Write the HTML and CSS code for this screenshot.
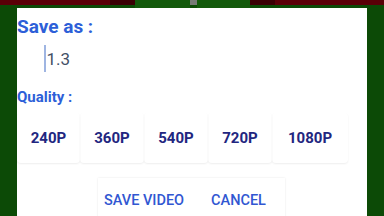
FILE: index.html
```html
<!DOCTYPE html>
<html lang="en">
<head>
	<meta charset="UTF-8">
	<title>Save as</title>
	<link rel="stylesheet" href="styles.css">
</head>
<body>
	<div class="strip">
		<div class="seg red" style="width:110px"></div>
		<div class="seg dark" style="width:25px"></div>
		<div class="seg green" style="width:55px"></div>
		<div class="seg grey" style="width:7px"></div>
		<div class="seg green" style="width:53px"></div>
		<div class="seg dark" style="width:25px"></div>
		<div class="seg red fill"></div>
	</div>
	<div class="dialog">
		<div class="title">Save as :</div>
		<div class="field">
			<span class="cursor"></span>
			<span class="value">1.3</span>
		</div>
		<div class="label">Quality :</div>
		<div class="quality">
			<div class="card">240P</div>
			<div class="card">360P</div>
			<div class="card">540P</div>
			<div class="card">720P</div>
			<div class="card">1080P</div>
		</div>
		<div class="actions">
			<a href="#" class="btn">SAVE VIDEO</a>
			<a href="#" class="btn">CANCEL</a>
		</div>
	</div>
</body>
</html>
```

FILE: styles.css
```css
*{margin:0px;padding:0px;box-sizing:border-box;}
body{
	width:384px;
	height:216px;
	overflow:hidden;
	background:#0c4a06;
	font-family:Roboto,"Liberation Sans",sans-serif;
}
.strip{
	display:flex;
	height:5px;
}
.strip .seg{
	height:5px;
}
.strip .red{background:#5a0007;}
.strip .dark{background:#3a0004;}
.strip .green{background:#135a0b;height:8px;}
.strip .grey{background:#777a76;}
.strip .fill{flex:1;}
.dialog{
	margin:3px 0 0 17px;
	width:350px;
	height:208px;
	background:#fff;
	padding-top:8px;
}
.title{
	font-size:19px;
	font-weight:bold;
	line-height:22px;
	color:#2d5fd8;
}
.field{
	display:flex;
	align-items:center;
	height:27px;
	margin-top:7px;
	padding-left:27px;
}
.field .cursor{
	width:1.5px;
	height:27px;
	background:#9fb5e2;
}
.field .value{
	margin-left:1px;
	font-size:17px;
	line-height:20px;
	color:#445066;
}
.label{
	margin-top:16px;
	font-size:15px;
	font-weight:bold;
	line-height:18px;
	color:#2d5fd8;
}
.quality{
	display:grid;
	grid-template-columns:63px 64px 64px 64px 76px;
	height:50px;
	margin-top:7px;
}
.quality .card{
	display:flex;
	align-items:center;
	justify-content:center;
	border-radius:4px;
	box-shadow:0 1px 2px rgba(0,0,0,0.07);
	font-size:15px;
	font-weight:bold;
	color:#22267f;
}
.actions{
	display:flex;
	gap:27px;
	width:187px;
	height:40px;
	margin:15px 0 0 81px;
	padding:14px 0 0 6px;
	box-shadow:0 0 2px rgba(0,0,0,0.10);
}
.actions .btn{
	font-size:14.5px;
	font-weight:500;
	line-height:18px;
	color:#3157d2;
	text-decoration:none;
}
```
